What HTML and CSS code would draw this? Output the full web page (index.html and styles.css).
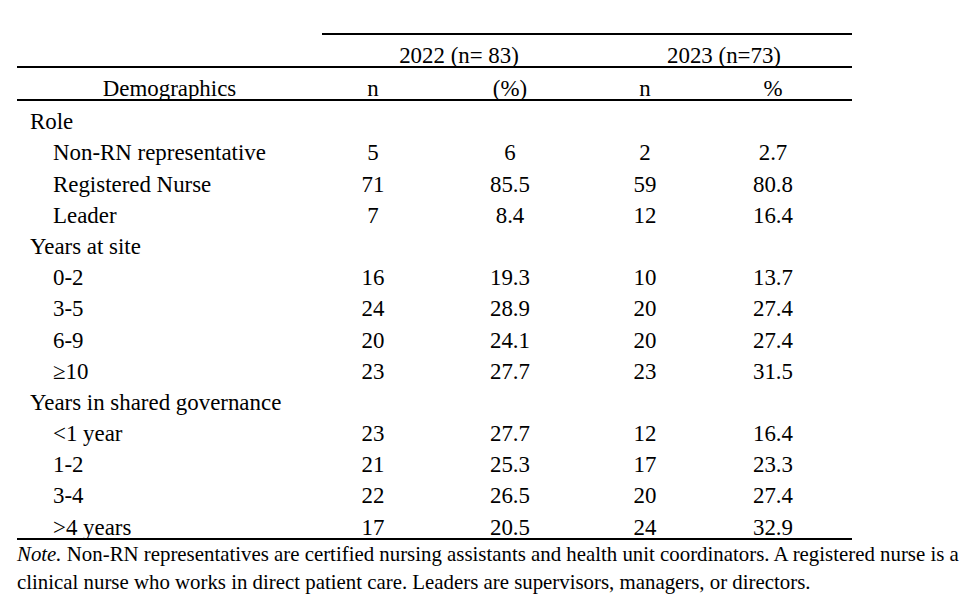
FILE: index.html
```html
<!DOCTYPE html>
<html>
<head>
<meta charset="utf-8">
<link rel="stylesheet" href="styles.css">
</head>
<body>
<div class="page">
<table class="demo">
  <colgroup>
    <col class="c-label"><col class="c-n1"><col class="c-p1"><col class="c-n2"><col class="c-p2">
  </colgroup>
  <thead>
    <tr class="h1">
      <th class="blank"></th>
      <th colspan="2" class="year">2022 (n= 83)</th>
      <th colspan="2" class="year">2023 (n=73)</th>
    </tr>
    <tr class="h2">
      <th>Demographics</th>
      <th>n</th>
      <th>(%)</th>
      <th>n</th>
      <th>%</th>
    </tr>
  </thead>
  <tbody>
    <tr class="group"><td colspan="5">Role</td></tr>
    <tr><td class="sub">Non-RN representative</td><td>5</td><td>6</td><td>2</td><td>2.7</td></tr>
    <tr><td class="sub">Registered Nurse</td><td>71</td><td>85.5</td><td>59</td><td>80.8</td></tr>
    <tr><td class="sub">Leader</td><td>7</td><td>8.4</td><td>12</td><td>16.4</td></tr>
    <tr class="group"><td colspan="5">Years at site</td></tr>
    <tr><td class="sub">0-2</td><td>16</td><td>19.3</td><td>10</td><td>13.7</td></tr>
    <tr><td class="sub">3-5</td><td>24</td><td>28.9</td><td>20</td><td>27.4</td></tr>
    <tr><td class="sub">6-9</td><td>20</td><td>24.1</td><td>20</td><td>27.4</td></tr>
    <tr><td class="sub">≥10</td><td>23</td><td>27.7</td><td>23</td><td>31.5</td></tr>
    <tr class="group"><td colspan="5">Years in shared governance</td></tr>
    <tr><td class="sub">&lt;1 year</td><td>23</td><td>27.7</td><td>12</td><td>16.4</td></tr>
    <tr><td class="sub">1-2</td><td>21</td><td>25.3</td><td>17</td><td>23.3</td></tr>
    <tr><td class="sub">3-4</td><td>22</td><td>26.5</td><td>20</td><td>27.4</td></tr>
    <tr class="last"><td class="sub">&gt;4 years</td><td>17</td><td>20.5</td><td>24</td><td>32.9</td></tr>
  </tbody>
</table>
<p class="note"><em>Note.</em> Non-RN representatives are certified nursing assistants and health unit coordinators. A registered nurse is a clinical nurse who works in direct patient care. Leaders are supervisors, managers, or directors.</p>
</div>
</body>
</html>
```

FILE: styles.css
```css
html, body {
  margin: 0;
  padding: 0;
  background: #ffffff;
}
body {
  font-family: "Liberation Serif", "Times New Roman", serif;
  color: #000000;
}
.page {
  padding: 33px 0 0 17px;
}
.demo {
  border-collapse: collapse;
  table-layout: fixed;
  width: 835px;
  font-size: 22.9px;
}
.c-label { width: 305px; }
.c-n1 { width: 102px; }
.c-p1 { width: 172px; }
.c-n2 { width: 98px; }
.c-p2 { width: 158px; }
.demo th, .demo td {
  padding: 11.2px 0 0 0;
  font-weight: normal;
  text-align: center;
  white-space: nowrap;
  line-height: 20px;
  height: 20px;
  vertical-align: top;
}
.h1 th {
  border-bottom: 2px solid #000;
  padding-top: 11px;
}
.h1 th.year {
  border-top: 2px solid #000;
}
.h2 th {
  border-bottom: 2px solid #000;
  padding-top: 11px;
}
.demo td:first-child {
  text-align: left;
  padding-left: 13px;
}
.demo td.sub {
  padding-left: 36px;
}
.last td {
  border-bottom: 2px solid #000;
}
.note {
  margin: 0;
  width: 963px;
  font-size: 20.85px;
  line-height: 28px;
}
```
